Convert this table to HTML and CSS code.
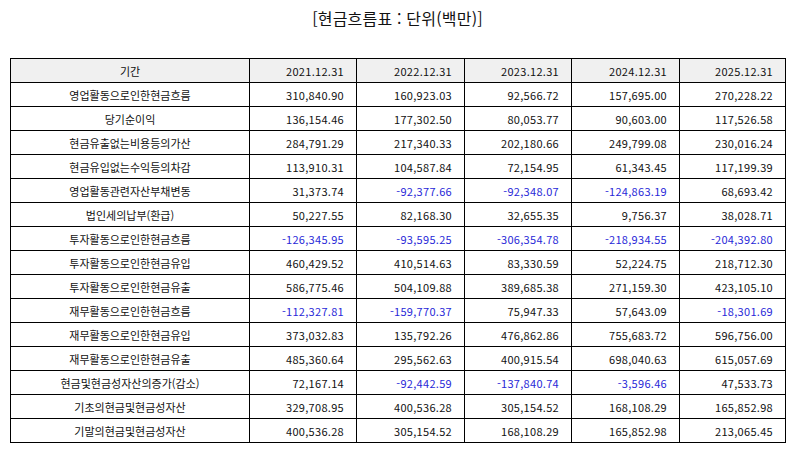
FILE: index.html
```html
<!DOCTYPE html>
<html lang="ko">
<head>
<meta charset="utf-8">
<title>현금흐름표</title>
<link rel="stylesheet" href="styles.css">
</head>
<body>
<div class="page">
  <h1 class="title">[현금흐름표 : 단위(백만)]</h1>
  <table class="cf">
    <colgroup>
      <col class="c-label">
      <col class="c-107"><col class="c-108"><col class="c-107"><col class="c-108"><col class="c-106">
    </colgroup>
    <thead>
      <tr><th class="label">기간</th><th>2021.12.31</th><th>2022.12.31</th><th>2023.12.31</th><th>2024.12.31</th><th>2025.12.31</th></tr>
    </thead>
    <tbody>
      <tr><td class="label">영업활동으로인한현금흐름</td><td>310,840.90</td><td>160,923.03</td><td>92,566.72</td><td>157,695.00</td><td>270,228.22</td></tr>
      <tr><td class="label">당기순이익</td><td>136,154.46</td><td>177,302.50</td><td>80,053.77</td><td>90,603.00</td><td>117,526.58</td></tr>
      <tr><td class="label">현금유출없는비용등의가산</td><td>284,791.29</td><td>217,340.33</td><td>202,180.66</td><td>249,799.08</td><td>230,016.24</td></tr>
      <tr><td class="label">현금유입없는수익등의차감</td><td>113,910.31</td><td>104,587.84</td><td>72,154.95</td><td>61,343.45</td><td>117,199.39</td></tr>
      <tr><td class="label">영업활동관련자산부채변동</td><td>31,373.74</td><td class="neg">-92,377.66</td><td class="neg">-92,348.07</td><td class="neg">-124,863.19</td><td>68,693.42</td></tr>
      <tr><td class="label">법인세의납부(환급)</td><td>50,227.55</td><td>82,168.30</td><td>32,655.35</td><td>9,756.37</td><td>38,028.71</td></tr>
      <tr><td class="label">투자활동으로인한현금흐름</td><td class="neg">-126,345.95</td><td class="neg">-93,595.25</td><td class="neg">-306,354.78</td><td class="neg">-218,934.55</td><td class="neg">-204,392.80</td></tr>
      <tr><td class="label">투자활동으로인한현금유입</td><td>460,429.52</td><td>410,514.63</td><td>83,330.59</td><td>52,224.75</td><td>218,712.30</td></tr>
      <tr><td class="label">투자활동으로인한현금유출</td><td>586,775.46</td><td>504,109.88</td><td>389,685.38</td><td>271,159.30</td><td>423,105.10</td></tr>
      <tr><td class="label">재무활동으로인한현금흐름</td><td class="neg">-112,327.81</td><td class="neg">-159,770.37</td><td>75,947.33</td><td>57,643.09</td><td class="neg">-18,301.69</td></tr>
      <tr><td class="label">재무활동으로인한현금유입</td><td>373,032.83</td><td>135,792.26</td><td>476,862.86</td><td>755,683.72</td><td>596,756.00</td></tr>
      <tr><td class="label">재무활동으로인한현금유출</td><td>485,360.64</td><td>295,562.63</td><td>400,915.54</td><td>698,040.63</td><td>615,057.69</td></tr>
      <tr><td class="label">현금및현금성자산의증가(감소)</td><td>72,167.14</td><td class="neg">-92,442.59</td><td class="neg">-137,840.74</td><td class="neg">-3,596.46</td><td>47,533.73</td></tr>
      <tr><td class="label">기초의현금및현금성자산</td><td>329,708.95</td><td>400,536.28</td><td>305,154.52</td><td>168,108.29</td><td>165,852.98</td></tr>
      <tr><td class="label">기말의현금및현금성자산</td><td>400,536.28</td><td>305,154.52</td><td>168,108.29</td><td>165,852.98</td><td>213,065.45</td></tr>
    </tbody>
  </table>
</div>
</body>
</html>
```

FILE: styles.css
```css
html, body {
  margin: 0;
  padding: 0;
  background: #ffffff;
}

body {
  font-family: "Noto Sans CJK KR", "Noto Sans", sans-serif;
  color: #111111;
}

.page {
  padding: 0 10px;
}

.title {
  margin: 0 0 22px 0;
  height: 36px;
  line-height: 36px;
  font-size: 16px;
  font-weight: normal;
  letter-spacing: 0.2px;
  text-align: center;
  color: #111111;
}

.cf {
  width: 775px;
  border-collapse: collapse;
  table-layout: fixed;
  font-size: 11px;
}

.c-label { width: 239px; }
.c-106 { width: 106px; }
.c-107 { width: 107px; }
.c-108 { width: 108px; }

.cf th,
.cf td {
  border: 1px solid #000000;
  height: 23px;
  padding: 0 12px;
  text-align: right;
  font-weight: normal;
  white-space: nowrap;
  line-height: 14px;
  letter-spacing: 0.3px;
}

.cf th {
  background: #f0f0f0;
}

.cf .label {
  text-align: center;
  letter-spacing: 0;
}

.cf .neg {
  color: #2828d8;
}
```
